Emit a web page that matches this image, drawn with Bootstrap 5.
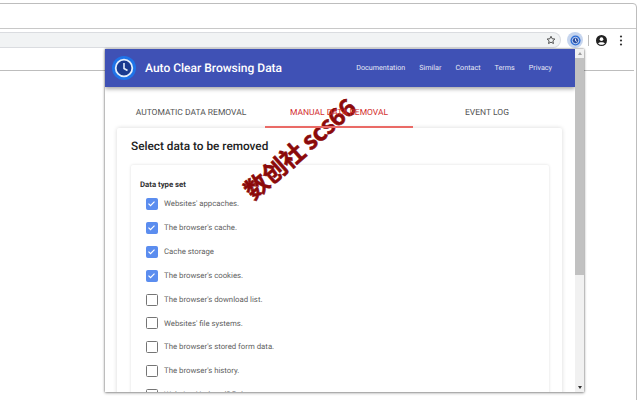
<!DOCTYPE html>
<html lang="en">
<head>
<meta charset="utf-8">
<title>Auto Clear Browsing Data</title>
<link href="https://cdn.jsdelivr.net/npm/bootstrap@5.3.0/dist/css/bootstrap.min.css" rel="stylesheet">
<style>
html,body{margin:0;width:640px;height:400px;overflow:hidden;background:#fff;font-family:Roboto,"Liberation Sans",sans-serif;text-rendering:geometricPrecision}
.desk{position:relative;width:640px;height:400px;overflow:hidden}
.chrome-win{position:absolute;left:-10px;top:3px;width:647px;height:420px;border:1px solid #bdbdbd;border-radius:4px}
.chrome-tabs{height:25px;border-bottom:1px solid #c8c8c8}
.chrome-tool{height:20px;padding-top:2px}
.omni{width:570px;height:16px;background:#f1f3f4;border:1px solid #dadce0;border-left:0;border-radius:0 8px 8px 0;padding-right:4px}
.ext-ring{width:16px;height:16px;border-radius:50%;background:#c6d5ee;margin-left:6px}
.divider-v{width:1px;height:11px;background:#bbb;margin:0 7px 0 5px}
.dots{margin-left:12px}
.chrome-page-line{position:absolute;left:0;top:70px;width:634px;height:1px;background:#bdbdbd}
.popup{position:absolute;left:105px;top:49px;width:479px;height:343px;background:#fff;box-shadow:0 0 2px rgba(0,0,0,.5),0 1px 3px rgba(0,0,0,.3);overflow:hidden}
.popup-main{width:470px;height:343px;overflow:hidden}
.app-bar{height:38px;background:#3f51b5;color:#fff;box-shadow:0 2px 4px rgba(0,0,0,.35);padding:0 23px 0 7px;position:relative}
.app-logo{width:24px;height:24px}
.app-name{font-size:12px;font-weight:500;margin-left:9px}
.app-links{gap:14px;font-size:7.2px;color:#e8eaf6}
.tab-row{padding:13px 10px 0 12px;position:relative;z-index:1}
.tab-item{width:148px;height:28px;text-align:center;font-size:8.5px;line-height:27px;color:#555}
.tab-on{color:#d32f2f;border-bottom:2px solid #ea6a66}
.sheet{margin:0 13px 0 12px;height:280px;padding:10px 13px 0 14px;border-radius:2px;box-shadow:0 0 4px rgba(0,0,0,.16)}
.sheet-title{font-size:11.8px;font-weight:500;color:#212121;line-height:17px;margin:0 0 10px}
.inner-sheet{height:260px;padding:14px 15px 0 9px;box-shadow:0 0 3px rgba(0,0,0,.14);border-radius:2px}
.set-label{font-size:7.8px;font-weight:700;color:#333;line-height:12px;margin-bottom:1px}
.opt{height:23.9px;margin-left:6px;font-size:7.8px;color:#5f5f5f;gap:6px}
.box{width:12px;height:12px;border:1.5px solid #757575;border-radius:1.5px;flex:none;background:#fff}
.box-on{background:#5b8def;border-color:#5b8def}
.box svg{display:block;width:9px;height:9px}
.bar{width:9px;height:343px;background:#f1f1f1}
.bar-thumb{height:217px;background:#c1c1c1;margin-top:9px}
.bar-up,.bar-down{position:absolute;right:2px;width:0;height:0;border-left:2.5px solid transparent;border-right:2.5px solid transparent}
.bar-up{top:3px;border-bottom:3px solid #9e9e9e}
.bar-down{bottom:3px;border-top:3px solid #333}
.stamp{position:absolute;left:214px;top:135px;width:170px;text-align:center;font-family:"Noto Sans CJK SC","Liberation Sans",sans-serif;font-weight:700;font-size:24px;line-height:26px;letter-spacing:-.5px;color:#8b0a0a;-webkit-text-stroke:.6px #8b0a0a;transform:rotate(-41deg);white-space:nowrap}
</style>
</head>
<body>
<div class="desk">
  <div class="chrome-win">
    <div class="chrome-tabs"></div>
    <div class="chrome-tool d-flex align-items-center">
      <div class="omni d-flex align-items-center justify-content-end">
        <svg width="10" height="10" viewBox="0 0 24 24" fill="none" stroke="#444" stroke-width="2.2"><path d="M12 3l2.8 6 6.5.7-4.8 4.4 1.4 6.4-5.9-3.3-5.9 3.3 1.4-6.4L2.700 9.700 9.200 9z"/></svg>
      </div>
      <div class="ext-ring d-flex align-items-center justify-content-center">
        <svg width="11" height="11" viewBox="0 0 24 24"><circle cx="12" cy="12" r="11" fill="#2f6fd6"/><circle cx="12" cy="12" r="7" fill="#274a9e" stroke="#d6e4fa" stroke-width="2"/><path d="M12 8v4.500l3 1.500" stroke="#fff" stroke-width="2" fill="none"/></svg>
      </div>
      <div class="divider-v"></div>
      <svg width="11" height="11" viewBox="0 0 24 24"><circle cx="12" cy="12" r="12" fill="#212121"/><circle cx="12" cy="9" r="4" fill="#fff"/><path d="M4.500 18.500c2-3.500 13-3.500 15 0-4 4-11 4-15 0z" fill="#fff"/></svg>
      <svg class="dots" width="4" height="11" viewBox="0 0 4 11" fill="#333"><circle cx="2" cy="1.500" r="1.100"/><circle cx="2" cy="5.500" r="1.100"/><circle cx="2" cy="9.500" r="1.100"/></svg>
    </div>
  </div>
  <div class="chrome-page-line"></div>

  <div class="popup d-flex">
    <div class="popup-main">
      <div class="app-bar d-flex align-items-center">
        <svg class="app-logo" viewBox="0 0 24 24"><circle cx="12" cy="12" r="12" fill="#1e73e8"/><circle cx="12" cy="12" r="8.300" fill="#1a3a8f" stroke="#e3eefc" stroke-width="1.800"/><path d="M12 7v5.500l3.500 2" stroke="#e3eefc" stroke-width="1.600" fill="none"/></svg>
        <div class="app-name">Auto Clear Browsing Data</div>
        <div class="app-links d-flex ms-auto">
          <span>Documentation</span><span>Similar</span><span>Contact</span><span>Terms</span><span>Privacy</span>
        </div>
      </div>
      <div class="tab-row d-flex">
        <div class="tab-item">AUTOMATIC DATA REMOVAL</div>
        <div class="tab-item tab-on">MANUAL DATA REMOVAL</div>
        <div class="tab-item">EVENT LOG</div>
      </div>
      <div class="sheet">
        <h2 class="sheet-title">Select data to be removed</h2>
        <div class="inner-sheet">
          <div class="set-label">Data type set</div>
          <div class="opt d-flex align-items-center"><span class="box box-on"><svg viewBox="0 0 12 12"><path d="M2 6.200l2.700 2.700L10 3.500" stroke="#fff" stroke-width="1.600" fill="none"/></svg></span>Websites' appcaches.</div>
          <div class="opt d-flex align-items-center"><span class="box box-on"><svg viewBox="0 0 12 12"><path d="M2 6.200l2.700 2.700L10 3.500" stroke="#fff" stroke-width="1.600" fill="none"/></svg></span>The browser's cache.</div>
          <div class="opt d-flex align-items-center"><span class="box box-on"><svg viewBox="0 0 12 12"><path d="M2 6.200l2.700 2.700L10 3.500" stroke="#fff" stroke-width="1.600" fill="none"/></svg></span>Cache storage</div>
          <div class="opt d-flex align-items-center"><span class="box box-on"><svg viewBox="0 0 12 12"><path d="M2 6.200l2.700 2.700L10 3.500" stroke="#fff" stroke-width="1.600" fill="none"/></svg></span>The browser's cookies.</div>
          <div class="opt d-flex align-items-center"><span class="box"></span>The browser's download list.</div>
          <div class="opt d-flex align-items-center"><span class="box"></span>Websites' file systems.</div>
          <div class="opt d-flex align-items-center"><span class="box"></span>The browser's stored form data.</div>
          <div class="opt d-flex align-items-center"><span class="box"></span>The browser's history.</div>
          <div class="opt d-flex align-items-center"><span class="box"></span>Websites' IndexedDB data.</div>
        </div>
      </div>
    </div>
    <div class="bar position-relative">
      <div class="bar-up"></div>
      <div class="bar-thumb"></div>
      <div class="bar-down"></div>
    </div>
  </div>
  <div class="stamp">数创社 scs66</div>
</div>
<script src="https://cdn.jsdelivr.net/npm/bootstrap@5.3.0/dist/js/bootstrap.bundle.min.js"></script>
</body>
</html>
